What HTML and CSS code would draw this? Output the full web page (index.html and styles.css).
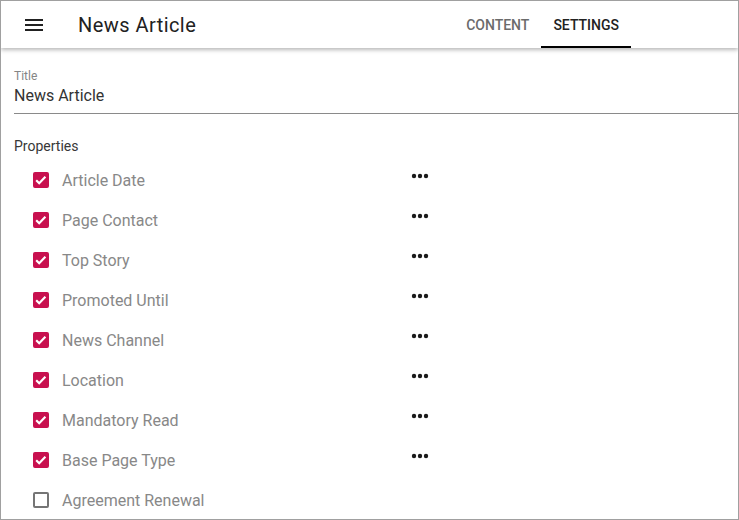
FILE: index.html
```html
<!DOCTYPE html>
<html lang="en">
<head>
<meta charset="utf-8">
<title>News Article</title>
<link rel="stylesheet" href="styles.css">
</head>
<body>
<div class="frame">
  <header class="topbar">
    <button class="menu-btn" aria-label="Menu">
      <svg viewBox="0 0 24 24" width="24" height="24"><path d="M3 18h18v-2H3v2zm0-5h18v-2H3v2zm0-7v2h18V6H3z" fill="#212121"/></svg>
    </button>
    <h1 class="app-title">News Article</h1>
    <nav class="tabs">
      <a class="tab">CONTENT</a>
      <a class="tab tab-active">SETTINGS</a>
    </nav>
  </header>
  <main class="content">
    <div class="field">
      <label class="field-label">Title</label>
      <div class="field-input">News Article</div>
    </div>
    <div class="section-label">Properties</div>
    <ul class="props">
      <li class="prop"><span class="cb checked"><svg viewBox="0 0 16 16"><path d="M3.2 8.2l3 3 6.2-6.4" fill="none" stroke="#fff" stroke-width="2.2"/></svg></span><span class="prop-name">Article Date</span><span class="more"><svg viewBox="0 0 24 24"><circle cx="6" cy="12" r="2.2"/><circle cx="12" cy="12" r="2.2"/><circle cx="18" cy="12" r="2.2"/></svg></span></li>
      <li class="prop"><span class="cb checked"><svg viewBox="0 0 16 16"><path d="M3.2 8.2l3 3 6.2-6.4" fill="none" stroke="#fff" stroke-width="2.2"/></svg></span><span class="prop-name">Page Contact</span><span class="more"><svg viewBox="0 0 24 24"><circle cx="6" cy="12" r="2.2"/><circle cx="12" cy="12" r="2.2"/><circle cx="18" cy="12" r="2.2"/></svg></span></li>
      <li class="prop"><span class="cb checked"><svg viewBox="0 0 16 16"><path d="M3.2 8.2l3 3 6.2-6.4" fill="none" stroke="#fff" stroke-width="2.2"/></svg></span><span class="prop-name">Top Story</span><span class="more"><svg viewBox="0 0 24 24"><circle cx="6" cy="12" r="2.2"/><circle cx="12" cy="12" r="2.2"/><circle cx="18" cy="12" r="2.2"/></svg></span></li>
      <li class="prop"><span class="cb checked"><svg viewBox="0 0 16 16"><path d="M3.2 8.2l3 3 6.2-6.4" fill="none" stroke="#fff" stroke-width="2.2"/></svg></span><span class="prop-name">Promoted Until</span><span class="more"><svg viewBox="0 0 24 24"><circle cx="6" cy="12" r="2.2"/><circle cx="12" cy="12" r="2.2"/><circle cx="18" cy="12" r="2.2"/></svg></span></li>
      <li class="prop"><span class="cb checked"><svg viewBox="0 0 16 16"><path d="M3.2 8.2l3 3 6.2-6.4" fill="none" stroke="#fff" stroke-width="2.2"/></svg></span><span class="prop-name">News Channel</span><span class="more"><svg viewBox="0 0 24 24"><circle cx="6" cy="12" r="2.2"/><circle cx="12" cy="12" r="2.2"/><circle cx="18" cy="12" r="2.2"/></svg></span></li>
      <li class="prop"><span class="cb checked"><svg viewBox="0 0 16 16"><path d="M3.2 8.2l3 3 6.2-6.4" fill="none" stroke="#fff" stroke-width="2.2"/></svg></span><span class="prop-name">Location</span><span class="more"><svg viewBox="0 0 24 24"><circle cx="6" cy="12" r="2.2"/><circle cx="12" cy="12" r="2.2"/><circle cx="18" cy="12" r="2.2"/></svg></span></li>
      <li class="prop"><span class="cb checked"><svg viewBox="0 0 16 16"><path d="M3.2 8.2l3 3 6.2-6.4" fill="none" stroke="#fff" stroke-width="2.2"/></svg></span><span class="prop-name">Mandatory Read</span><span class="more"><svg viewBox="0 0 24 24"><circle cx="6" cy="12" r="2.2"/><circle cx="12" cy="12" r="2.2"/><circle cx="18" cy="12" r="2.2"/></svg></span></li>
      <li class="prop"><span class="cb checked"><svg viewBox="0 0 16 16"><path d="M3.2 8.2l3 3 6.2-6.4" fill="none" stroke="#fff" stroke-width="2.2"/></svg></span><span class="prop-name">Base Page Type</span><span class="more"><svg viewBox="0 0 24 24"><circle cx="6" cy="12" r="2.2"/><circle cx="12" cy="12" r="2.2"/><circle cx="18" cy="12" r="2.2"/></svg></span></li>
      <li class="prop"><span class="cb"></span><span class="prop-name">Agreement Renewal</span></li>
    </ul>
  </main>
</div>
</body>
</html>
```
FILE: styles.css
```css
* { box-sizing: border-box; }
html, body { margin: 0; padding: 0; background: #fff; }
body { font-family: Roboto, "Liberation Sans", sans-serif; }

.frame {
  width: 739px;
  height: 520px;
  border: 1px solid #a0a0a0;
  overflow: hidden;
  display: flex;
  flex-direction: column;
}

.topbar {
  height: 47px;
  flex: none;
  display: flex;
  align-items: center;
  background: #fff;
  box-shadow: 0 2px 4px rgba(0,0,0,0.28);
  position: relative;
  z-index: 1;
}
.menu-btn {
  border: 0;
  background: none;
  padding: 0;
  margin-left: 21px;
  width: 24px;
  height: 24px;
  display: flex;
}
.app-title {
  margin: 0 0 0 32px;
  font-size: 20px;
  font-weight: 400;
  line-height: 20px;
  color: #212121;
  letter-spacing: 0.45px;
}
.tabs {
  margin-left: auto;
  margin-right: 107px;
  display: flex;
  height: 100%;
}
.tab {
  display: flex;
  align-items: center;
  padding: 0 12px;
  font-size: 14px;
  font-weight: 500;
  color: #6b6b6b;
  border-bottom: 2px solid transparent;
  padding-top: 2px;
}
.tab-active {
  color: #222;
  border-bottom-color: #000;
}

.content {
  padding: 20px 0 0 13px;
  flex: 1;
}
.field-label {
  display: block;
  font-size: 12px;
  line-height: 16px;
  color: #858585;
}
.field-input {
  font-size: 16px;
  line-height: 24px;
  color: #333;
  padding-bottom: 5px;
  border-bottom: 1px solid #8a8a8a;
}
.section-label {
  margin-top: 22px;
  font-size: 14px;
  line-height: 20px;
  color: #383838;
}
.props {
  list-style: none;
  margin: 4px 0 0;
  padding: 0;
}
.prop {
  height: 40px;
  display: flex;
  align-items: center;
  padding-left: 19px;
}
.cb {
  width: 16px;
  height: 16px;
  border: 2px solid #757575;
  border-radius: 2px;
  flex: none;
  display: flex;
}
.cb.checked {
  background: #c8114f;
  border-color: #c8114f;
}
.cb svg {
  width: 16px;
  height: 16px;
  margin: -2px;
}
.prop-name {
  margin-left: 13px;
  width: 346px;
  font-size: 16px;
  color: #888;
}
.more {
  width: 24px;
  height: 24px;
  align-self: flex-start;
  margin-top: 4px;
  display: flex;
}
.more svg { width: 24px; height: 24px; fill: #1a1a1a; }
```
